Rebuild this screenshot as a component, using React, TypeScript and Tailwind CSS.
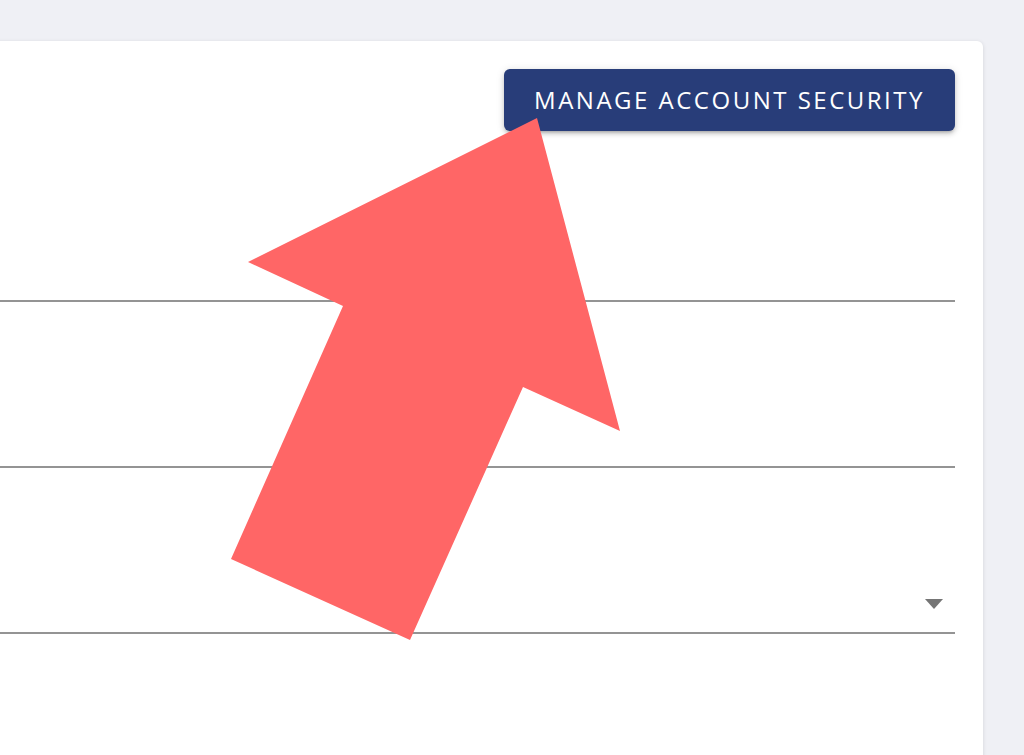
import React from "react";

function Field({ h, select }: { h: string; select?: boolean }) {
    return (
        <div className={`relative ${h} border-b-2 border-[#949494]`}>
            {select && (
                <svg className="absolute right-[12px] bottom-[23px]" width="18" height="10" viewBox="0 0 18 10">
                    <path d="M0 0 L18 0 L9 10 Z" fill="#757575" />
                </svg>
            )}
        </div>
    );
}

export default function App() {
    return (
        <div className="relative flex h-[755px] overflow-hidden bg-[#eff0f5] pt-[41px] pr-[41px] font-['Open_Sans',sans-serif]">
            <div className="-mb-4 -ml-4 flex flex-1 flex-col rounded-md bg-white pl-4 pr-[28px] pt-[28px] shadow-[0_1px_4px_rgba(0,0,0,0.12)]">
                <div className="flex justify-end">
                    <button className="flex h-[62px] w-[451px] items-center justify-center rounded-md bg-[#283d79] text-[24px] tracking-[2.5px] text-white shadow-[0_3px_3px_-2px_rgba(0,0,0,0.2),0_3px_5px_0_rgba(0,0,0,0.14),0_1px_8px_0_rgba(0,0,0,0.12)]">
                        MANAGE ACCOUNT SECURITY
                    </button>
                </div>
                <Field h="h-[171px]" />
                <Field h="h-[166px]" />
                <Field h="h-[166px]" select />
            </div>

            {/* annotation arrow */}
            <svg className="pointer-events-none absolute left-0 top-0" width="1024" height="755">
                <polygon
                    points="537,118 620,431 523,387 410,640 231,559 343,306 248,262"
                    fill="#ff6666"
                />
            </svg>
        </div>
    );
}
